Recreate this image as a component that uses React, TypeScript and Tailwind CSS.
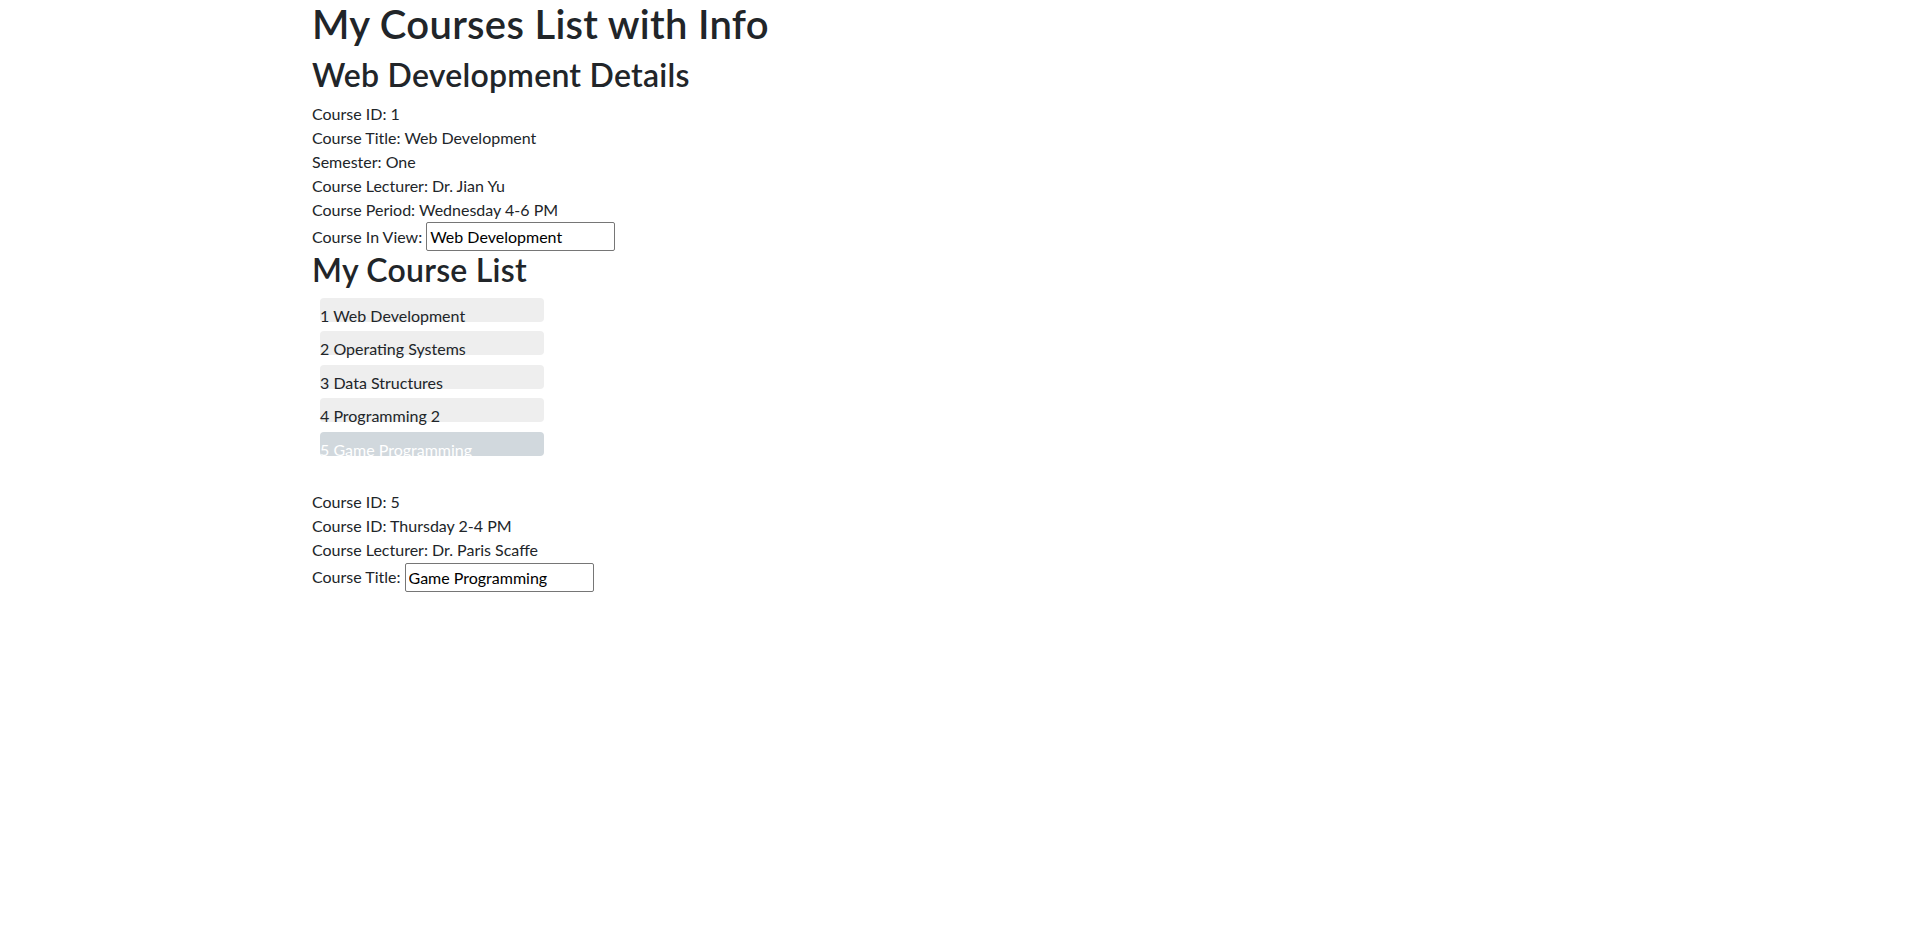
import { useState } from 'react';

type Course = {
  id: number;
  title: string;
  semester: string;
  lecturer: string;
  period: string;
};

const initialCourses: Course[] = [
  { id: 1, title: 'Web Development', semester: 'One', lecturer: 'Dr. Jian Yu', period: 'Wednesday 4-6 PM' },
  { id: 2, title: 'Operating Systems', semester: 'One', lecturer: 'Dr. Ann Kelly', period: 'Monday 10-12 AM' },
  { id: 3, title: 'Data Structures', semester: 'Two', lecturer: 'Dr. Tom Reid', period: 'Tuesday 1-3 PM' },
  { id: 4, title: 'Programming 2', semester: 'Two', lecturer: 'Dr. Mary Lee', period: 'Friday 9-11 AM' },
  { id: 5, title: 'Game Programming', semester: 'Two', lecturer: 'Dr. Paris Scaffe', period: 'Thursday 2-4 PM' },
];

export default function App() {
  const [courses, setCourses] = useState(initialCourses);
  const [viewTitle, setViewTitle] = useState('Web Development');
  const [selectedId, setSelectedId] = useState(5);

  const first = courses[0];
  const selected = courses.find((c) => c.id === selectedId) ?? courses[0];

  const renameSelected = (title: string) => {
    setCourses((prev) => prev.map((c) => (c.id === selectedId ? { ...c, title } : c)));
  };

  return (
    <div className="min-h-screen bg-white text-[#212529] font-['Lato',sans-serif] text-base leading-6">
      <div className="mx-auto w-[1320px] px-3">
        <h1 className="text-[40px] leading-[48px] font-semibold tracking-[0.3px] mb-2">
          My Courses List with Info
        </h1>
        <h2 className="text-[32px] leading-[38.4px] font-semibold tracking-[0.25px] mb-2">
          {first.title} Details
        </h2>

        <div>Course ID: {first.id}</div>
        <div>Course Title: {first.title}</div>
        <div>Semester: {first.semester}</div>
        <div>Course Lecturer: {first.lecturer}</div>
        <div>Course Period: {first.period}</div>
        <div className="flex items-center gap-[4px] h-[29px]">
          <span>Course In View:</span>
          <input
            value={viewTitle}
            onChange={(e) => setViewTitle(e.target.value)}
            className="w-[189px] h-[29px] border border-[#767676] rounded-[2px] px-[3px] text-black outline-none"
          />
        </div>

        <h2 className="text-[32px] leading-[38.4px] font-semibold tracking-[0.25px] mb-2">
          My Course List
        </h2>
        <ul className="flex flex-col gap-[9.5px] ml-2 mt-[2px]">
          {courses.map((c) => (
            <li
              key={c.id}
              onClick={() => setSelectedId(c.id)}
              className={
                c.id === selectedId
                  ? 'w-[224px] h-6 rounded bg-[#d1d8dd] text-white cursor-pointer'
                  : 'w-[224px] h-6 rounded bg-[#eeeeee] cursor-pointer'
              }
            >
              <span className="relative top-[6px] block leading-6 whitespace-nowrap">
                {c.id} {c.title}
              </span>
            </li>
          ))}
        </ul>

        <div className="mt-[34px]">
          <div>Course ID: {selected.id}</div>
          <div>Course ID: {selected.period}</div>
          <div>Course Lecturer: {selected.lecturer}</div>
          <div className="flex items-center gap-[4px] h-[29px] mt-[1px]">
            <span>Course Title:</span>
            <input
              value={selected.title}
              onChange={(e) => renameSelected(e.target.value)}
              className="w-[189px] h-[29px] border border-[#767676] rounded-[2px] px-[3px] text-black outline-none"
            />
          </div>
        </div>
      </div>
    </div>
  );
}
